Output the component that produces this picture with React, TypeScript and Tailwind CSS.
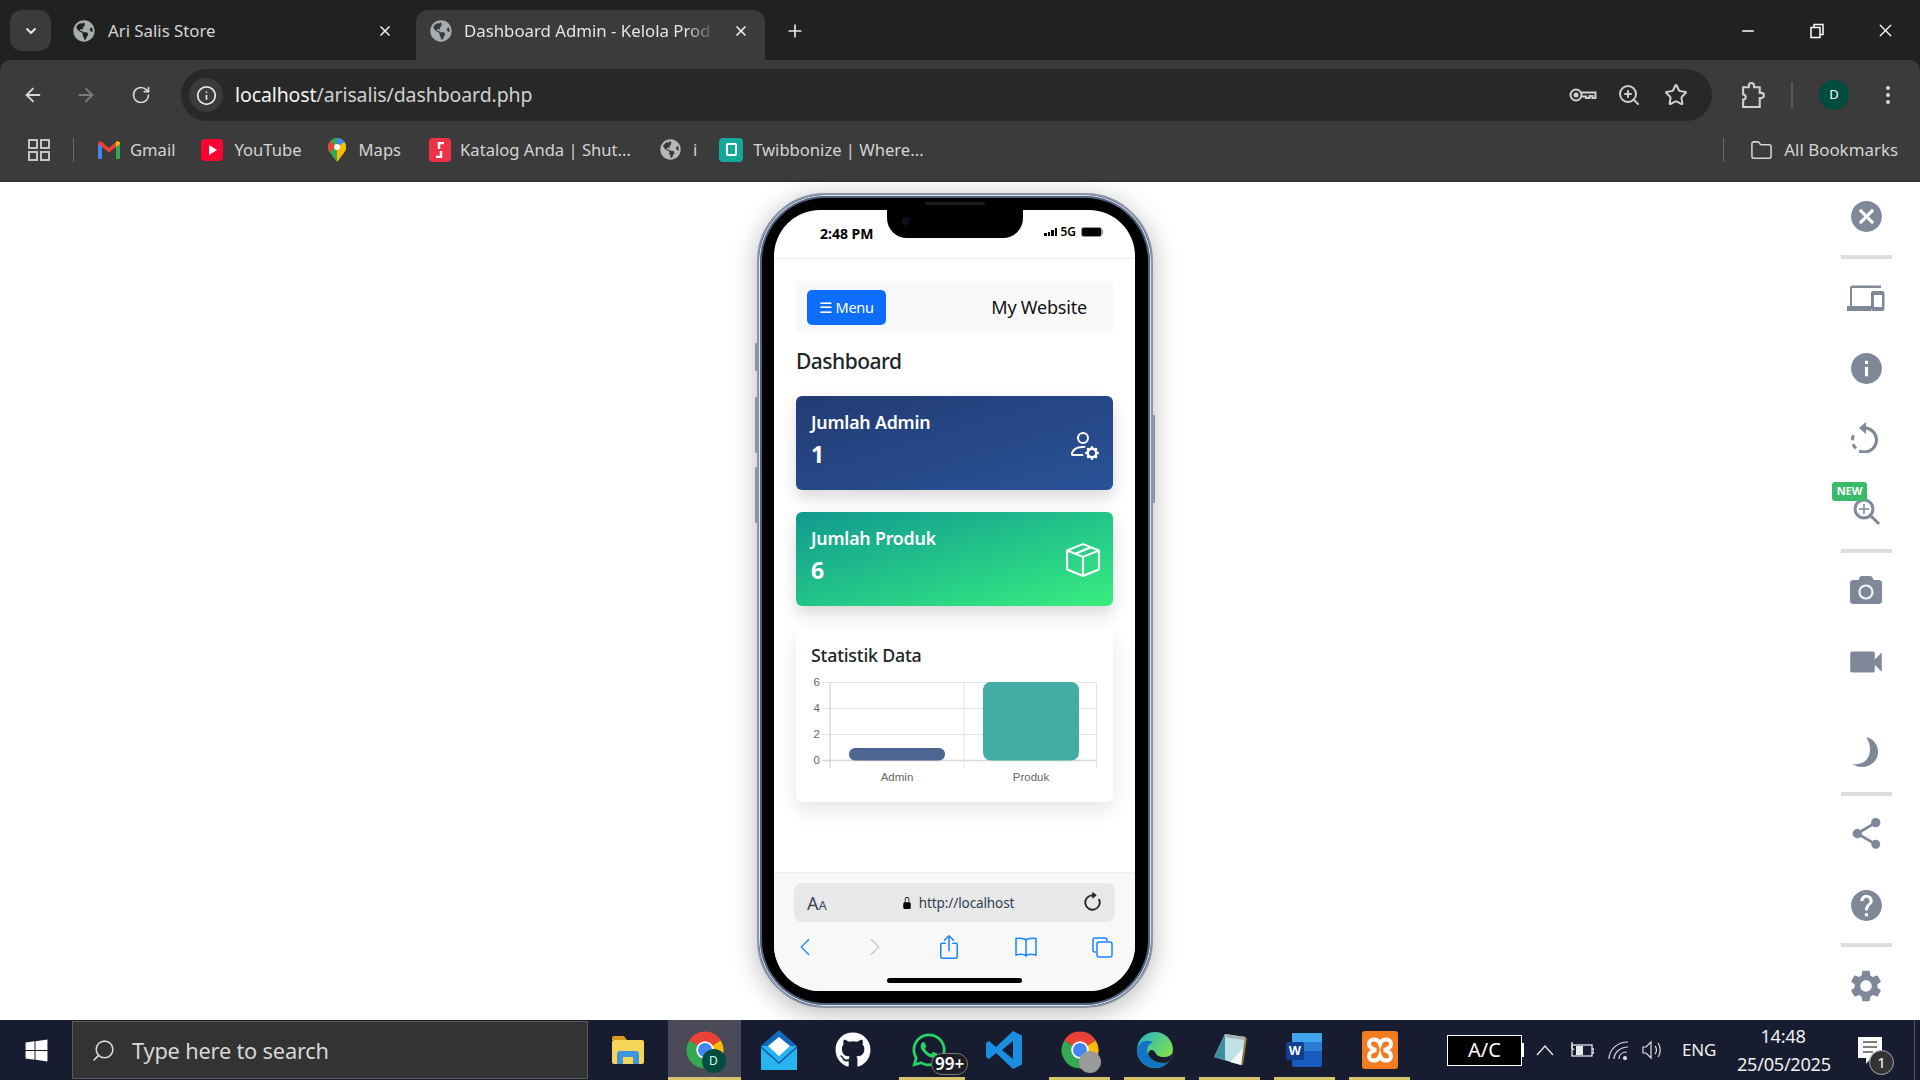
import { ArrowLeft, ArrowRight, ChevronDown, EllipsisVertical, Folder, Info, Minus, Plus, RotateCw, Star, X, ZoomIn, Search } from "lucide-react";
import { BsArrowClockwise, BsBoxArrowUp, BsBoxSeam, BsChevronLeft, BsChevronRight, BsLockFill, BsPersonGear } from "react-icons/bs";
import { FaCamera, FaGithub, FaGlobeAmericas, FaWhatsapp, FaWindows } from "react-icons/fa";
import { MdCancel, MdHelp, MdInfo, MdSettings, MdShare, MdVideocam } from "react-icons/md";

const SANS = "font-['Noto_Sans','Open_Sans',sans-serif]";

// ── 브라우저 상단 ──────────────────────────────────────────────
function ChromeLogo({ size = 44 }: { size?: number }) {
  return (
    <svg width={size} height={size} viewBox="0 0 48 48">
      <path d="M24 24 6 13A21 21 0 0 1 42 13Z" fill="#ea4335" />
      <path d="M24 24 42 13A21 21 0 0 1 24 45Z" fill="#fbbc04" />
      <path d="M24 24 24 45A21 21 0 0 1 6 13Z" fill="#34a853" />
      <circle cx="24" cy="24" r="10" fill="#fff" />
      <circle cx="24" cy="24" r="8" fill="#4285f4" />
    </svg>
  );
}

function TabStrip() {
  return (
    <div className="flex h-[60px] items-start bg-[#202221] pt-[10px] text-[16.8px]">
      <div className="ml-[10px] flex h-[41px] w-[41px] items-center justify-center rounded-[12px] bg-[#3b3b3b] text-[#e6e6e6]">
        <ChevronDown size={16} strokeWidth={3} />
      </div>
      <div className="ml-[22px] flex h-[41px] w-[343px] items-center text-[#d6d6d6]">
        <FaGlobeAmericas size={22} className="text-[#a9adb0]" />
        <span className="ml-[13px] flex-1">Ari Salis Store</span>
        <X size={16} strokeWidth={2.5} className="mr-[23px] text-[#e8e8e8]" />
      </div>
      <div className="flex h-[50px] w-[349px] items-start rounded-t-[12px] bg-[#3b3b3b] text-[#e4e4e4]">
        <div className="flex h-[41px] w-full items-center pl-[14px]">
          <FaGlobeAmericas size={22} className="shrink-0 text-[#a9adb0]" />
          <span className="ml-[12px] w-[252px] overflow-hidden whitespace-nowrap [mask-image:linear-gradient(to_right,black_88%,transparent)]">Dashboard Admin - Kelola Prod</span>
          <X size={16} strokeWidth={2.5} className="ml-[17px] shrink-0 text-[#f0f0f0]" />
        </div>
      </div>
      <div className="ml-[20px] flex h-[41px] items-center text-[#e8e8e8]">
        <Plus size={20} strokeWidth={2} />
      </div>
      <div className="ml-auto flex h-[41px] items-center text-white">
        <Minus size={18} strokeWidth={2} />
        <svg width="16" height="16" viewBox="0 0 16 16" fill="none" stroke="#fff" strokeWidth="1.5" className="ml-[52px]">
          <rect x="2" y="4.5" width="9" height="10" />
          <path d="M5 4V1.5h9v10h-3" />
        </svg>
        <X size={21} strokeWidth={1.5} className="ml-[50px] mr-[24px]" />
      </div>
    </div>
  );
}

function Toolbar() {
  return (
    <div className="flex h-[62px] items-start rounded-t-[10px] bg-[#3b3b3b] pt-[9px]">
      <div className="flex h-[52px] w-[181px] items-center pl-[22px]">
        <ArrowLeft size={22} className="text-[#d8d8d8]" />
        <ArrowRight size={22} className="ml-[31px] text-[#7c7c7c]" />
        <RotateCw size={20} className="ml-[34px] text-[#d8d8d8]" />
      </div>
      <div className="flex h-[52px] w-[1531px] items-center rounded-full bg-[#282828] pl-[8px] pr-[24px]">
        <div className="flex h-[34px] w-[34px] items-center justify-center rounded-full bg-[#3b3b3b]">
          <Info size={21} className="text-[#e6e6e6]" />
        </div>
        <span className="ml-[12px] text-[19.5px] tracking-[-0.1px] text-[#d0d0d0]">
          <span className="text-[#f4f4f4]">localhost</span>/arisalis/dashboard.php
        </span>
        <svg width="28" height="18" viewBox="0 0 28 18" fill="none" stroke="#cfcfcf" strokeWidth="2" className="ml-auto">
          <circle cx="7" cy="9" r="5.5" />
          <circle cx="7" cy="9" r="1.5" fill="#cfcfcf" />
          <path d="M12.5 6.5H26.5V12H23.5V10H20.5V12H17V10.5H12.5" />
        </svg>
        <ZoomIn size={24} className="ml-[20px] text-[#cfcfcf]" />
        <Star size={24} className="ml-[23px] text-[#cfcfcf]" />
      </div>
      <div className="flex h-[52px] flex-1 items-center text-[#cfcfcf]">
        <svg width="25" height="27" viewBox="0 0 24 26" fill="none" stroke="currentColor" strokeWidth="2" className="ml-[29px]">
          <path d="M2 5h5.500V3.500a2.500 2.500 0 0 1 5 0V5H18v5.500h1.500a2.500 2.500 0 0 1 0 5H18V24H2v-7a2.500 2.500 0 0 0 0-5Z" />
        </svg>
        <div className="ml-[25px] h-[26px] w-[2px] bg-[#5a5a5a]" />
        <div className="ml-[26px] flex h-[30px] w-[30px] items-center justify-center rounded-full bg-[#004d40] text-[13px] text-white">D</div>
        <EllipsisVertical size={24} className="ml-[27px] text-[#d8d8d8]" />
      </div>
    </div>
  );
}

function Bookmark({ icon, label, className }: { icon: React.ReactNode; label: string; className: string }) {
  return (
    <div className={`flex items-center ${className}`}>
      {icon}
      <span className="whitespace-nowrap">{label}</span>
    </div>
  );
}

function BookmarksBar() {
  return (
    <div className="flex h-[60px] items-center border-b-2 border-[#333333] bg-[#3b3b3b] pb-[2px] text-[16.6px] text-[#d4d4d4]">
      <svg width="22" height="22" viewBox="0 0 22 22" fill="none" stroke="#c4c4c4" strokeWidth="2" className="ml-[28px]">
        <rect x="1" y="1" width="8" height="8" />
        <rect x="13" y="1" width="8" height="8" />
        <rect x="1" y="13" width="8" height="8" />
        <rect x="13" y="13" width="8" height="8" />
      </svg>
      <div className="ml-[23px] h-[24px] w-[1px] bg-[#6a6a6a]" />
      <Bookmark
        className="ml-[24px] gap-[10px]"
        label="Gmail"
        icon={
          <svg width="22" height="18" viewBox="0 0 22 18">
            <path d="M0 3 4 2v16H1.500A1.500 1.500 0 0 1 0 16.500Z" fill="#4285f4" />
            <path d="M22 3 18 2v16h2.500A1.500 1.500 0 0 0 22 16.500Z" fill="#34a853" />
            <path d="M0 3C0 .5 2.500-.5 4 1l7 6 7-6c1.500-1.500 4-.5 4 2l-4 3-7 5.500L4 6Z" fill="#ea4335" />
            <path d="M18 1c1.500-1.500 4-.5 4 2l-4 3Z" fill="#fbbc04" />
          </svg>
        }
      />
      <Bookmark
        className="ml-[26px] gap-[11px]"
        label="YouTube"
        icon={
          <div className="flex h-[22px] w-[22px] items-center justify-center rounded-[4px] bg-[#ff0033]">
            <div className="ml-[2px] h-0 w-0 border-y-[5px] border-l-[8px] border-y-transparent border-l-white" />
          </div>
        }
      />
      <Bookmark
        className="ml-[26px] gap-[13px]"
        label="Maps"
        icon={
          <svg width="18" height="24" viewBox="0 0 18 24">
            <path d="M9 0a9 9 0 0 1 7.500 14L9 24 1.500 14A9 9 0 0 1 9 0Z" fill="#34a853" />
            <path d="M9 0a9 9 0 0 1 7.500 4L9 9Z" fill="#4285f4" />
            <path d="M1.500 14A9 9 0 0 1 2.500 3L9 9Z" fill="#ea4335" />
            <path d="M16.500 4A9 9 0 0 1 16.500 14L9 24V9Z" fill="#fbbc04" />
            <circle cx="9" cy="9" r="3" fill="#fff" />
          </svg>
        }
      />
      <Bookmark
        className="ml-[28px] gap-[9px]"
        label="Katalog Anda | Shut..."
        icon={
          <div className="flex h-[24px] w-[22px] items-center justify-center rounded-[4px] bg-[#ee3147]">
            <svg width="12" height="16" viewBox="0 0 12 16" fill="none" stroke="#fff" strokeWidth="2.5">
              <path d="M10 1H5v6M2 15h5V9" />
            </svg>
          </div>
        }
      />
      <Bookmark className="ml-[29px] gap-[12px]" label="i" icon={<FaGlobeAmericas size={21} className="text-[#b4b8bb]" />} />
      <Bookmark
        className="ml-[22px] gap-[10px]"
        label="Twibbonize | Where..."
        icon={
          <div className="flex h-[24px] w-[24px] items-center justify-center rounded-[4px] bg-[#14a89b]">
            <div className="h-[13px] w-[11px] rounded-[2px] border-[2.5px] border-white" />
          </div>
        }
      />
      <div className="ml-auto h-[24px] w-[1px] bg-[#6a6a6a]" />
      <Folder size={23} strokeWidth={1.6} className="ml-[26px] text-[#d4d4d4]" />
      <span className="ml-[11px] mr-[22px] text-[16.9px]">All Bookmarks</span>
    </div>
  );
}

// ── 휴대폰 안쪽 ───────────────────────────────────────────────
function StatCard({ title, value, gradient, icon }: { title: string; value: string; gradient: string; icon: React.ReactNode }) {
  return (
    <div className={`flex h-[94px] items-center justify-between rounded-[6px] pl-[15px] pr-[14px] text-white shadow-[0_8px_16px_rgba(0,0,0,0.15)] ${gradient}`}>
      <div className="self-start pt-[14px]">
        <div className="text-[17.8px] font-semibold leading-[24px] tracking-[-0.2px]">{title}</div>
        <div className="mt-[7px] text-[23px] font-bold leading-[26px]">{value}</div>
      </div>
      {icon}
    </div>
  );
}

function Chart() {
  const ys = [8.5, 34.5, 60.5, 86.5];
  return (
    <svg width="286" height="110" viewBox="0 0 286 110" className="mt-[7px]">
      {ys.map((y, i) => (
        <g key={y}>
          <line x1="11" x2="286" y1={y} y2={y} stroke={i === 3 ? "#d8d8d8" : "#e4e4e4"} strokeWidth={i === 3 ? 1.5 : 1} />
          <text x="9" y={y + 3.5} textAnchor="end" fontSize="11.5" fontFamily="Liberation Sans" fill="#666">
            {6 - i * 2}
          </text>
        </g>
      ))}
      <line x1="19" x2="19" y1="8" y2="94" stroke="#c8c8c8" />
      <line x1="153" x2="153" y1="8" y2="94" stroke="#e4e4e4" />
      <line x1="285.500" x2="285.500" y1="8" y2="94" stroke="#e4e4e4" />
      <rect x="38" y="74" width="96" height="12.500" rx="6" fill="#4d6590" />
      <rect x="172" y="8" width="96" height="78.500" rx="8" fill="#42ada5" />
      <text x="86" y="107" textAnchor="middle" fontSize="11.5" fontFamily="Liberation Sans" fill="#666">Admin</text>
      <text x="220" y="107" textAnchor="middle" fontSize="11.5" fontFamily="Liberation Sans" fill="#666">Produk</text>
    </svg>
  );
}

function Phone() {
  return (
    <div className="relative mt-[11px] h-[815px] w-[396px] rounded-[68px] border-[2px] border-[#8a95aa] bg-black py-[15px] pl-[15px] pr-[16px] shadow-[0_5px_26px_rgba(0,0,0,0.28),inset_0_0_0_1px_#e2e6ec,inset_0_0_0_3px_#4f5f7e]">
      {/* 측면 버튼 */}
      <div className="absolute -left-[4px] top-[148px] h-[28px] w-[3px] rounded-l-[1px] bg-[#8a95aa]" />
      <div className="absolute -left-[4px] top-[202px] h-[56px] w-[3px] rounded-l-[1px] bg-[#8a95aa]" />
      <div className="absolute -left-[4px] top-[272px] h-[56px] w-[3px] rounded-l-[1px] bg-[#8a95aa]" />
      <div className="absolute -right-[4px] top-[220px] h-[88px] w-[3px] rounded-r-[1px] bg-[#8a95aa]" />
      <div className="absolute left-[166px] top-[7px] h-[3px] w-[60px] rounded-full bg-[#1c1c1c]" />

      <div className={`relative flex h-full flex-col overflow-hidden rounded-[46px] bg-white ${SANS}`}>
        {/* 노치 */}
        <div className="absolute left-[113px] top-0 h-[28px] w-[136px] rounded-b-[20px] bg-black" />
        <div className="absolute left-[128px] top-[7px] h-[8px] w-[8px] rounded-full bg-[#0b0f1e]" />

        <div className="flex h-[49px] items-center border-b border-[#eeeeee] pl-[46px] pr-[32px]">
          <span className="text-[14px] font-bold leading-none text-black">2:48 PM</span>
          <div className="ml-auto flex items-center pb-[5px]">
            <div className="flex items-end gap-[1px]">
              <div className="h-[3px] w-[2.500px] bg-black" />
              <div className="h-[4px] w-[2.500px] bg-black" />
              <div className="h-[6px] w-[2.500px] bg-black" />
              <div className="h-[8px] w-[2.500px] bg-black" />
            </div>
            <span className="ml-[3px] text-[12px] font-semibold leading-none text-black">5G</span>
            <div className="ml-[5px] h-[10px] w-[21px] rounded-[2.500px] border border-[#999] bg-black" />
            <div className="h-[4px] w-[1px] bg-[#999]" />
          </div>
        </div>

        <div className="flex-1 px-[22px] pt-[22px]">
          <div className="flex h-[52px] items-center justify-between bg-[#f8f9fa] pl-[11px] pr-[26px]">
            <div className="flex h-[35px] w-[79px] items-center justify-center rounded-[5px] bg-[#0d6efd] pt-[1px] text-[14.5px] tracking-[-0.3px] text-white">☰ Menu</div>
            <span className="text-[18px] tracking-[-0.2px] text-[#111]">My Website</span>
          </div>
          <h1 className="mt-[12px] text-[21px] font-medium leading-[32px] tracking-[-0.5px] text-[#212529]">Dashboard</h1>
          <div className="mt-[19px] flex flex-col gap-[22px]">
            <StatCard
              title="Jumlah Admin"
              value="1"
              gradient="bg-gradient-to-br from-[#223c74] to-[#2a5298]"
              icon={<BsPersonGear size={32} className="mt-[2px]" />}
            />
            <StatCard
              title="Jumlah Produk"
              value="6"
              gradient="bg-gradient-to-br from-[#11998e] to-[#38ef7d]"
              icon={<BsBoxSeam size={34} className="-mr-[1px] mt-[2px]" />}
            />
            <div className="h-[174px] rounded-[6px] bg-white px-[15px] pt-[15px] shadow-[0_8px_20px_rgba(0,0,0,0.1)]">
              <div className="text-[17.8px] font-medium leading-[24px] tracking-[-0.2px] text-[#212529]">Statistik Data</div>
              <Chart />
            </div>
          </div>
        </div>

        {/* 사파리 하단 */}
        <div className="flex h-[119px] flex-col border-t border-[#f0f0f0] bg-[#f8f8f8] px-[20px] pt-[10px]">
          <div className="flex h-[39px] items-center rounded-[8px] bg-[#e8e8e8] pl-[13px] pr-[12px]">
            <span className="text-[18px] leading-none text-[#3c4a5c]">A<span className="text-[13px]">A</span></span>
            <div className="ml-[74px] flex items-center pt-[1px] text-[13.500px] tracking-[-0.1px] text-[#2f3e52]">
              <BsLockFill size={12} className="text-black" />
              <span className="ml-[6px]">http://localhost</span>
            </div>
            <BsArrowClockwise size={21} className="ml-auto text-[#222]" strokeWidth={0.4} />
          </div>
          <div className="mt-[13px] flex items-center text-[#1a84ff]">
            <BsChevronLeft size={20} className="ml-[1px]" />
            <BsChevronRight size={20} className="ml-[50px] text-[#c8c8c8]" />
            <BsBoxArrowUp size={24} className="ml-[52px]" />
            <svg width="24" height="20" viewBox="0 0 24 20" fill="none" stroke="currentColor" strokeWidth="1.5" className="ml-[53px]">
              <path d="M12 3C10 1 6 1 2 1.500V18c4-1 8-1 10 1 2-2 6-2 10-1V1.500C18 1 14 1 12 3Zm0 0v16" />
            </svg>
            <svg width="21" height="21" viewBox="0 0 21 21" fill="none" stroke="currentColor" strokeWidth="1.5" className="ml-[54px]">
              <path d="M4.500 15H3a2 2 0 0 1-2-2V3a2 2 0 0 1 2-2h10a2 2 0 0 1 2 2v1" />
              <rect x="5" y="5" width="15" height="15" rx="2" />
            </svg>
          </div>
          <div className="mx-auto mt-auto mb-[8px] h-[5px] w-[135px] rounded-full bg-black" />
        </div>
      </div>
    </div>
  );
}

// ── 오른쪽 도구 모음 ──────────────────────────────────────────
function RailRule({ className }: { className: string }) {
  return <div className={`h-[4px] w-[51px] shrink-0 bg-[#dcdde0] ${className}`} />;
}

function RightRail() {
  return (
    <div className="flex w-[108px] flex-col items-center pt-[18px] text-[#7f8899]">
      <div className="flex h-[32px] items-center"><MdCancel size={37} /></div>
      <RailRule className="mt-[23px]" />
      <svg width="38" height="32" viewBox="0 0 38 32" fill="currentColor" className="mt-[23px] shrink-0">
        <path d="M4 4h29V1.500H4a2.500 2.500 0 0 0-2 2.500V22H4Z" transform="translate(1 2)" />
        <rect x="0" y="24" width="24" height="5" />
        <path d="M26 9h9a2.500 2.500 0 0 1 2.500 2.500v15A2.500 2.500 0 0 1 35 29h-9a2 2 0 0 1-2-2V11a2 2 0 0 1 2-2Zm1 4v12h8V13Z" fillRule="evenodd" />
      </svg>
      <div className="mt-[38px] flex h-[32px] items-center"><MdInfo size={37} /></div>
      <svg width="32" height="32" viewBox="0 0 32 32" fill="none" stroke="currentColor" strokeWidth="3" className="mt-[37px] shrink-0">
        <path d="M15 7a12 12 0 1 1-1 24" />
        <path d="M14 31A12 12 0 0 1 4 13" strokeDasharray="5 4" />
        <path d="M16 1 9 7l7 6Z" fill="currentColor" stroke="none" />
      </svg>
      <div className="relative mt-[41px] h-[32px] w-[32px] shrink-0">
        <svg width="32" height="32" viewBox="0 0 32 32" fill="none" stroke="currentColor" strokeWidth="3" className="absolute left-[1px] top-[1px]">
          <circle cx="13" cy="14" r="9" />
          <path d="m20 21 8 8" />
          <path d="M13 9v10M8 14h10" strokeWidth="1.5" />
        </svg>
        <div className={`absolute -left-[18px] -top-[12px] flex h-[19px] w-[35px] items-center justify-center rounded-[3px] bg-[#3cba6c] text-[11px] font-bold text-white ${SANS}`}>NEW</div>
      </div>
      <RailRule className="mt-[23px]" />
      <div className="mt-[21px] flex h-[32px] items-center"><FaCamera size={32} /></div>
      <div className="mt-[40px] flex h-[32px] items-center"><MdVideocam size={42} /></div>
      <svg width="32" height="32" viewBox="0 0 32 32" fill="currentColor" className="mt-[58px] shrink-0">
        <path d="M16 1C24 3 28 9 28 16C28 25 20 31 12 31C8 31 5 30 3 28C12 29 20 24 20 14C20 9 19 5 16 1Z" />
      </svg>
      <RailRule className="mt-[24px]" />
      <div className="mt-[21px] flex h-[32px] items-center"><MdShare size={37} /></div>
      <div className="mt-[40px] flex h-[32px] items-center"><MdHelp size={37} /></div>
      <RailRule className="mt-[22px]" />
      <div className="mt-[23px] flex h-[32px] items-center"><MdSettings size={38} /></div>
    </div>
  );
}

// ── 작업 표시줄 ───────────────────────────────────────────────
function TaskIcon({ children, running, active, className }: { children: React.ReactNode; running?: boolean; active?: boolean; className: string }) {
  return (
    <div className={`relative flex h-full items-center justify-center ${active ? "bg-[#4a4a58]" : ""} ${className}`}>
      {children}
      {running && <div className="absolute bottom-0 left-0 right-0 h-[3px] bg-[#d6c36a]" />}
    </div>
  );
}

function Taskbar() {
  return (
    <div className={`flex h-[60px] items-center bg-[#181c30] text-white ${SANS}`}>
      <div className="flex w-[72px] items-center justify-center">
        <FaWindows size={25} />
      </div>
      <div className="flex h-[58px] w-[516px] items-center border border-[#5c5c5c] bg-[#333333] pl-[18px] text-[21.800px] text-[#d8d8d8]">
        <Search size={25} strokeWidth={1.5} className="-scale-x-100" />
        <span className="ml-[16px] pt-[3px] tracking-[-0.2px]">Type here to search</span>
      </div>
      <TaskIcon className="ml-[10px] w-[60px]">
        <svg width="32" height="30" viewBox="0 0 32 30">
          <path d="M0 3a2 2 0 0 1 2-2h10l3 4H0Z" fill="#d99a1b" />
          <rect x="0" y="5" width="32" height="24" rx="2" fill="#f7d558" />
          <path d="M5 29V19a3 3 0 0 1 3-3h16a3 3 0 0 1 3 3v10h-6V22H11v7Z" fill="#3b96dd" />
        </svg>
      </TaskIcon>
      <TaskIcon running active className="ml-[10px] w-[73px]">
        <div className="relative">
          <ChromeLogo size={42} />
          <div className="absolute -bottom-[2px] right-0 flex h-[24px] w-[24px] items-center justify-center rounded-full bg-[#004d40] text-[12px] text-[#cfe]">D</div>
        </div>
      </TaskIcon>
      <TaskIcon className="ml-[1px] w-[74px]">
        <svg width="36" height="40" viewBox="0 0 36 40">
          <path d="M18 0 36 16v24H0V16Z" fill="#0f6cbd" />
          <path d="M0 16h36v24H0Z" fill="#28b4f0" />
          <path d="M0 16 18 32 36 16v2L18 34 0 18Z" fill="#0b5cad" />
          <path d="M7 16 18 7l11 9-11 10Z" fill="#fff" />
        </svg>
      </TaskIcon>
      <TaskIcon className="w-[74px]">
        <FaGithub size={36} />
      </TaskIcon>
      <TaskIcon running className="ml-[9px] w-[66px]">
        <div className="relative -ml-[6px]">
          <FaWhatsapp size={38} className="text-[#25d366]" />
          <div className="absolute -bottom-[6px] left-[21px] rounded-full border border-[#777] bg-[#1c1c24] px-[3px] text-[17px] font-semibold leading-[20px]">99+</div>
        </div>
      </TaskIcon>
      <TaskIcon className="ml-[2px] w-[74px]">
        <svg width="36" height="38" viewBox="0 0 36 38">
          <path d="M27 0 36 4.500v29L27 38 10 22 3 28l-3-2V12l3-2 7 6Z" fill="#1a8fe0" />
          <path d="M27 10 16 19l11 9Z" fill="#181c30" />
        </svg>
      </TaskIcon>
      <TaskIcon running className="ml-[8px] w-[61px]">
        <div className="relative">
          <ChromeLogo size={42} />
          <div className="absolute -bottom-[2px] right-0 h-[22px] w-[22px] rounded-full bg-[#9a9a9a]" />
        </div>
      </TaskIcon>
      <TaskIcon running className="ml-[14px] w-[61px]">
        <svg width="36" height="36" viewBox="0 0 36 36">
          <defs>
            <linearGradient id="edge1" x1="0.100" y1="0" x2="0.900" y2="0.700">
              <stop offset="0" stopColor="#2bb5c8" />
              <stop offset="1" stopColor="#7fe04a" />
            </linearGradient>
          </defs>
          <circle cx="18" cy="18" r="18" fill="url(#edge1)" />
          <path d="M0 18C1 10 9 7 16 10C11 12 9 17 11 22C13 28 20 31 27 31C30 31 32 30 33 28C30 33 24 36 18 36C8 36 0 28 0 18Z" fill="#1274c4" />
          <path d="M11 22C13 28 20 31 27 31C30 31 32 30 33 28C34 26 36 23 36 20C34 24 31 25 27 25C22 25 19 23 18 20C16 17 12 17 11 22Z" fill="#181c30" />
        </svg>
      </TaskIcon>
      <TaskIcon running className="ml-[14px] w-[61px]">
        <svg width="36" height="36" viewBox="0 0 36 36">
          <path d="M31 4 35 6 31 33 28 33Z" fill="#8a7a4a" />
          <path d="M13 2 33 5 29 33 2 25Z" fill="#bfe0e4" />
          <path d="M13 2 2 25 13 28Z" fill="#3f8ea0" />
          <path d="M18 30 29 33 31 16Z" fill="#f4f7f8" />
          <path d="M13 2 33 5 32.500 8 12 5Z" fill="#a6b0b3" />
        </svg>
      </TaskIcon>
      <TaskIcon running className="ml-[14px] w-[61px]">
        <svg width="36" height="36" viewBox="0 0 36 36" className="absolute left-[12px] top-[12px]">
          <rect x="6" y="1" width="30" height="34" rx="2" fill="#185abd" />
          <rect x="6" y="1" width="30" height="9" rx="1" fill="#41a5ee" />
          <rect x="6" y="10" width="30" height="9" fill="#2b7cd3" />
        </svg>
        <div className="absolute left-[12px] top-[22px] flex h-[18px] w-[18px] items-center justify-center rounded-[2px] bg-[#103f91] font-['Liberation_Sans',sans-serif] text-[13px] font-bold">W</div>
      </TaskIcon>
      <TaskIcon running className="ml-[14px] w-[61px]">
        <div className="flex h-[38px] w-[36px] items-center justify-center rounded-[3px] bg-[#f47b20]">
          <svg width="28" height="28" viewBox="0 0 28 28" fill="none" stroke="#fff" strokeWidth="4">
            <path d="M14 8c-2-6-11-6-11 0 0 3 3 5 7 6-4 1-7 3-7 6 0 6 9 6 11 0 2 6 11 6 11 0 0-3-3-5-7-6 4-1 7-3 7-6 0-6-9-6-11 0Z" />
          </svg>
        </div>
      </TaskIcon>
      <div className="ml-[37px] flex h-[31px] w-[75px] items-center justify-center border border-white bg-black text-[20px] leading-none">A/C</div>
      <div className="h-[14px] w-[2px] bg-white" />
      <svg width="18" height="12" viewBox="0 0 18 12" fill="none" stroke="#e8e8e8" strokeWidth="1.3" className="ml-[12px]">
        <path d="m1 11 8-9 8 9" />
      </svg>
      <svg width="24" height="18" viewBox="0 0 24 18" fill="none" stroke="#e8e8e8" strokeWidth="1.3" className="ml-[16px]">
        <rect x="2" y="4" width="20" height="11" />
        <rect x="6" y="5" width="7" height="9" fill="#e8e8e8" stroke="none" />
        <path d="M22 8h2v4h-2M2 1v6l2 2" />
      </svg>
      <svg width="22" height="20" viewBox="0 0 22 20" fill="none" stroke="#d8d8d8" strokeWidth="1.200" className="ml-[14px]">
        <path d="M1 19C1 10 9 2 20 2M6 19c0-6 6-12 14-12M11 19c0-4 3-7 8-7" />
        <circle cx="17" cy="18" r="1.500" fill="#d8d8d8" />
      </svg>
      <svg width="22" height="20" viewBox="0 0 22 20" fill="none" stroke="#e0e0e0" strokeWidth="1.200" className="ml-[12px]">
        <path d="M1 7h3l5-5v16l-5-5H1ZM13 6c2 2 2 6 0 8M16 3c3 4 3 10 0 14" />
      </svg>
      <span className="ml-[18px] w-[35px] whitespace-nowrap text-[17px] tracking-[-0.2px] text-[#f0f0f0]">ENG</span>
      <div className="ml-[20px] w-[92px] whitespace-nowrap text-center text-[18.200px] leading-[28px] tracking-[-0.3px] text-[#f0f0f0]">
        <div>14:48</div>
        <div>25/05/2025</div>
      </div>
      <div className="relative ml-[29px] h-[38px] w-[30px]">
        <svg width="26" height="30" viewBox="0 0 26 30" className="absolute left-0 top-[6px]">
          <path d="M0 0h24v21H13l-5 6v-6H0Z" fill="#fff" />
          <path d="M5 5h14M5 10h14M5 15h10" stroke="#555" strokeWidth="1.500" />
        </svg>
        <div className="absolute left-[11px] top-[19px] flex h-[25px] w-[25px] items-center justify-center rounded-full border border-[#aaa] bg-[#333] text-[15px] leading-none">1</div>
      </div>
      <div className="ml-auto mr-[5px] h-full w-[1px] bg-[#555]" />
    </div>
  );
}

export default function App() {
  return (
    <div className="flex h-[1080px] w-[1920px] flex-col overflow-hidden bg-white font-['Noto_Sans','Open_Sans',sans-serif]">
      <div className="bg-[#202221]">
        <TabStrip />
        <Toolbar />
        <BookmarksBar />
      </div>
      <div className="flex flex-1 overflow-hidden bg-white">
        <div className="w-[757px] shrink-0" />
        <Phone />
        <div className="flex-1" />
        <RightRail />
      </div>
      <Taskbar />
    </div>
  );
}
